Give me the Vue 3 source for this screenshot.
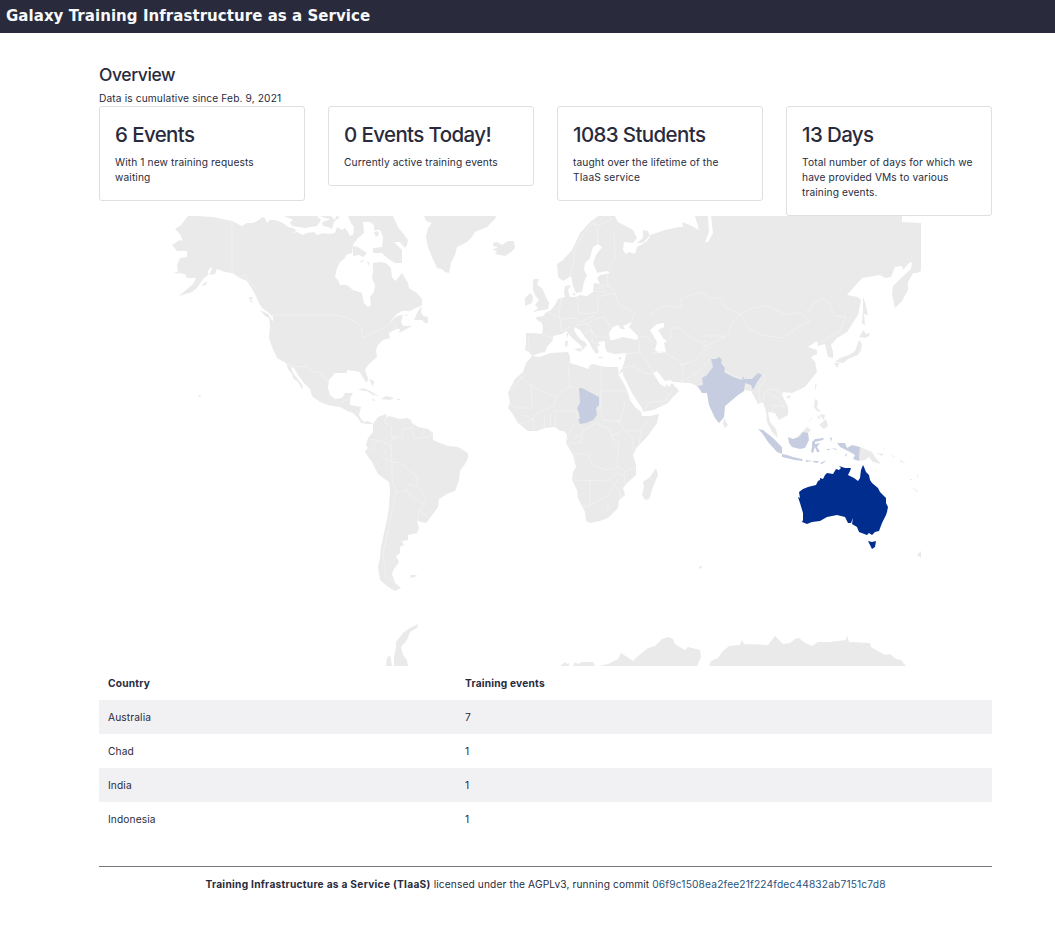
<script setup>
const stats = [
  { title: '6 Events', text: 'With 1 new training requests waiting' },
  { title: '0 Events Today!', text: 'Currently active training events' },
  { title: '1083 Students', text: 'taught over the lifetime of the TIaaS service' },
  { title: '13 Days', text: 'Total number of days for which we have provided VMs to various training events.' },
]

const rows = [
  { country: 'Australia', events: 7 },
  { country: 'Chad', events: 1 },
  { country: 'India', events: 1 },
  { country: 'Indonesia', events: 1 },
]

const land = [
  // North and Central America
  'M188 216L184 221L181 225L175 229L180 234L183 241L180 240L172 245L177 251L187 251L187 257L180 258L177 265L178 273L185 274L187 278L196 278L193 284L179 296L186 294L192 292L197 288L203 279L208 275L208 271L211 267L212 269L209 275L215 274L217 269L225 272L232 273L240 278L247 281L252 289L256 296L258 301L260 305L263 309L268 312L273 317L273 321L269 318L270 325L269 338L272 347L277 358L286 363L288 369L292 374L293 378L298 382L302 389L303 386L297 378L293 373L291 367L294 368L298 375L304 383L310 389L312 396L320 402L328 405L333 406L340 407L347 411L353 413L358 418L361 423L367 424L373 424L368 421L364 422L361 419L359 415L361 407L350 405L350 398L353 393L345 393L342 398L335 399L330 395L328 388L329 380L335 373L347 373L347 370L355 371L360 372L363 378L367 383L368 378L365 370L368 365L377 357L376 350L378 345L383 340L390 338L389 333L396 329L400 329L399 333L403 331L412 326L403 326L401 322L403 315L397 316L389 323L397 314L402 311L410 311L422 305L422 299L417 293L409 288L408 283L402 273L398 278L395 281L392 277L391 268L386 263L380 262L373 263L373 272L372 278L375 285L374 292L370 297L371 305L368 307L364 303L362 293L353 290L347 285L340 285L338 280L335 277L337 268L340 262L345 258L346 255L352 253L353 245L355 242L354 234L350 236L348 232L345 228L342 230L337 227L335 233L328 234L323 233L317 235L314 232L307 233L303 235L297 232L291 233L297 231L293 228L288 227L283 223L275 220L270 220L267 223L265 218L262 217L259 220L253 223L247 223L242 226L232 221L213 217L197 216Z',
  'M284 216L317 216L321 220L317 226L305 228L292 226L290 222L293 220Z',
  'M320 216L331 216L335 220L336 216L340 217L334 222L332 229L328 227L323 226L322 222L326 221L330 219L325 218Z',
  'M348 216L393 216L398 227L408 240L407 245L405 248L400 242L394 242L402 250L402 263L395 263L387 258L382 253L373 253L373 248L382 247L383 237L380 230L374 230L374 225L370 222L363 222L364 233L358 238L355 242L353 237L354 227L351 223Z',
  'M353 246L358 247L367 253L363 257L359 255L353 256Z',
  'M374 232L378 231L379 235L376 237Z M360 261L364 260L362 263Z M367 262L369 262L369 266Z',
  'M422 306L418 311L414 320L422 320L425 323L428 323L428 317L423 316L421 312Z M403 314L408 315L407 316Z',
  'M424 216L496 216L495 219L487 227L475 232L471 238L467 242L457 247L455 255L451 263L449 273L445 272L442 269L437 268L432 257L428 247L426 237L428 228L432 223L426 221Z',
  'M493 243L497 242L502 245L508 241L514 241L515 248L511 252L505 256L495 254L497 251L492 250L498 247L493 246Z',
  'M358 390L363 388L370 391L375 394L380 396L373 395L367 391Z M381 399L386 396L394 398L390 400Z M397 399H400V400H397Z M372 399L376 400L373 401Z M369 379L374 381L373 387Z',
  'M198 395L201 396L200 398Z M249 297L253 297L251 300L254 304L250 301Z M260 310L268 314L272 320L265 316Z M201 286L207 281L206 285Z M174 272L178 272L177 274Z',
  // South America
  'M373 424L378 417L386 414L387 419L388 416L393 417L400 419L407 418L411 420L412 423L418 427L428 429L433 433L433 440L440 443L448 446L458 447L468 453L468 458L465 464L460 471L459 480L455 491L447 494L439 499L438 507L430 518L426 523L417 521L419 528L417 533L408 535L408 540L402 541L404 545L400 547L400 553L396 556L399 562L394 569L392 574L395 583L401 588L395 591L387 586L380 580L378 567L380 558L381 547L384 533L387 520L389 507L390 490L389 482L378 474L372 462L366 454L365 451L368 448L366 445L368 438L373 432Z',
  'M410 575L417 575L415 577L411 578Z',
  // Europe, Asia and the Arabian peninsula
  'M557 264L558 277L563 281L571 276L573 286L576 293L582 292L584 282L587 275L584 270L585 263L590 258L593 247L598 244L602 247L596 255L593 263L596 270L597 273L607 271L610 273L600 275L597 278L600 284L594 283L593 292L587 296L580 295L576 297L570 297L568 290L571 285L565 286L564 293L565 297L558 299L555 305L551 310L545 313L544 316L536 317L537 320L542 323L543 328L542 334L533 333L526 333L526 343L525 350L529 352L532 356L540 353L545 352L547 347L553 340L553 336L562 334L566 331L568 333L572 338L578 343L582 347L581 352L584 348L587 345L585 342L580 339L577 335L574 330L575 327L580 330L585 337L589 342L592 348L596 354L599 352L597 347L600 345L598 342L605 341L605 347L607 352L615 354L626 353L625 360L622 368L619 374L623 372L623 375L633 395L642 408L643 412L653 410L668 403L673 397L679 391L672 383L669 387L667 384L665 387L660 384L653 373L657 371L665 381L670 380L673 382L690 383L695 385L699 389L702 393L707 393L709 405L715 418L719 423L724 417L725 406L738 395L745 390L751 391L756 400L758 404L763 402L766 412L767 422L772 432L778 438L776 429L770 422L768 412L775 413L779 420L788 415L788 407L782 395L783 392L792 393L805 387L817 372L815 362L811 357L817 354L817 350L808 347L817 341L818 346L825 344L828 357L833 358L833 352L831 345L837 338L847 332L858 315L861 300L858 297L847 295L862 278L880 275L885 278L891 277L895 267L902 266L903 270L910 262L912 263L911 269L902 277L893 286L892 294L895 308L902 301L908 290L908 282L913 273L917 273L921 271L921 223L902 222L902 216L711 216L713 233L708 242L705 242L709 232L708 216L695 216L699 230L690 225L682 222L683 227L679 227L665 230L650 235L644 242L641 243L637 243L643 238L643 230L648 231L650 237L646 242L637 247L635 254L629 252L626 254L623 250L624 242L633 243L637 238L633 230L618 222L615 216L598 216L590 222L580 233L572 250L563 260Z',
  'M533 282L534 279L539 279L537 285L542 288L545 295L549 303L548 309L533 312L538 308L535 305L539 300L535 295L533 290Z M525 298L530 293L533 296L532 303L525 306Z',
  'M565 341L568 341L567 347L565 346Z M566 334L568 333L568 338Z M574 349L581 348L580 352Z M598 357L603 357L603 358L598 358Z M618 358L622 357L620 360Z M572 294L575 293L575 296Z',
  // Africa
  'M618 367L619 376L622 380L627 390L630 400L635 407L641 412L642 416L650 416L659 414L657 423L647 437L637 447L633 455L636 465L636 475L627 483L623 488L625 495L619 500L618 508L608 518L600 521L590 523L586 521L585 512L578 498L577 490L572 480L573 472L576 467L573 455L566 443L567 435L564 431L560 431L555 427L545 428L537 431L528 431L518 423L512 413L508 408L510 402L508 392L515 379L523 372L526 363L532 356L540 357L550 353L568 352L570 357L570 363L580 366L588 369L590 365L594 364L600 366L608 367Z',
  'M656 468L658 475L653 487L649 499L645 500L642 495L644 487L643 482L650 477Z',
  // Asian islands and Oceania
  'M724 418L728 425L725 428L723 424Z M786 397L791 395L789 399Z M815 385L817 383L815 391Z M815 399L818 401L817 408L822 412L817 411L814 407Z M820 424L826 419L828 426L824 429L819 425Z M821 414L825 415L824 420L820 416Z M817 415L819 420L820 417Z M807 423L812 417L812 418Z',
  'M863 330L866 334L870 333L869 336L865 338L859 337L861 334Z M859 340L862 344L861 350L858 355L848 359L843 363L835 362L840 358L849 355L855 351Z M834 363L839 363L837 368Z',
  'M863 297L865 302L868 315L864 314L865 325L862 323L863 312Z',
  'M790 440L796 438L807 427L811 430L807 434L802 434L797 440Z',
  'M860 447L872 452L875 457L881 464L873 462L869 457L865 460L859 461Z M876 453L883 454L886 450L882 456Z M881 446L886 450L884 449Z M890 454L896 458L893 457Z M899 459L906 464L901 462Z M911 487L918 491L917 492Z M917 474L919 478L917 477Z M910 479H912V480H910Z',
  'M921 551L917 555L921 558Z M699 566L703 567L699 569Z',
  // Antarctica
  'M418 624L417 628L410 632L407 640L401 647L403 655L407 660L408 666L394 666L394 657L396 647L396 642L403 633L410 628Z M390 655L392 666L386 666L387 658Z',
  'M560 666L565 662L567 664L569 663L569 666Z M573 666L575 662L578 664L582 662L593 662L595 666Z M599 666L608 664L618 659L621 653L627 657L633 661L637 657L648 648L655 646L662 639L668 637L673 639L675 644L685 650L688 647L700 650L701 657L697 666Z',
  'M709 666L711 661L718 658L722 652L729 646L740 645L742 640L744 644L768 645L775 636L783 644L790 643L795 639L799 638L805 643L812 646L818 642L830 642L846 640L847 635L849 642L870 643L871 647L885 655L890 654L896 659L901 660L906 666Z',
]

const water = [
  'M610 340L609 333L613 327L618 325L621 329L625 329L623 326L632 322L629 327L638 336L637 340L623 337L613 340Z',
  'M650 330L657 324L664 323L664 327L658 330L663 338L667 341L664 343L666 352L659 353L655 350L657 342Z',
]

const borders = [
  'M232 221V272L240 278L244 274L250 282L257 290',
  'M272 315H336L348 318L358 323L362 330L362 338L370 334L378 330L384 328L391 322L396 324L396 330',
  'M286 364L296 367L307 366L314 373L319 371L326 380L329 381 M341 404L345 400H349',
  'M386 416L385 423L392 427L391 436L397 438L391 440L391 447 M392 437L402 437L403 429L413 428L412 423 M415 430L418 427M422 435L424 429M413 430L414 438L429 437L432 432',
  'M369 439L381 441L391 446L392 462L383 457L386 449 M369 452L379 440 M392 463L400 462L411 472L417 477L418 486L424 494L426 504L419 510L418 521 M392 463L392 480L396 492L406 491L409 484L418 487 M396 492L388 531L383 553L386 578L393 581 M420 511L428 517 M406 491L414 498L424 504',
  'M570 277L574 262L574 250L583 235L592 223L600 225L612 219 M598 244L597 228L592 223 M614 229L615 258L608 270 M607 274L608 285L614 291L619 304L635 313L632 320 M594 291L605 292 M598 297L614 293 M578 297L578 312L588 314L598 312L598 297 M561 299L559 315L562 319L575 318L580 322L594 316 M547 312L560 318L561 331L570 327 M575 325L588 324L596 337L608 337 M588 325L594 319L604 317L611 328 M585 333L592 330L592 342L597 344 M543 335L553 338 M528 337L530 351 M599 285L609 286 M596 288L604 288',
  'M622 355L639 352L645 358L653 372 M638 338L646 336L652 342 M622 368L633 366L644 373L652 374 M639 341L640 353 M643 412L650 402L665 401L672 391 M651 354L661 351L675 358L683 365L682 381 M670 342L671 329L678 327L687 334L700 343L707 341 M650 315L659 308L670 306L682 308L681 299L700 292L712 299L719 297L725 307L740 314L731 324L728 335L715 342L703 347 M703 336L720 336L726 338',
  'M740 314L753 308L766 306L774 309L787 315L800 312L806 318L810 321L795 329L783 338L761 335L748 328L741 315 M806 312L810 310L815 302L823 299L830 304L834 316L846 317L840 331L830 336L820 343',
  'M680 365L694 361L704 350L711 347 M682 381L697 373L710 359 M725 372L740 378 M744 391L747 385L751 391 M760 403L759 388L765 380L764 374 M763 401L764 393L771 389L778 390L784 397 M769 393L777 398L786 408 M772 412L773 405L784 407',
  'M523 376L513 388L508 392 M519 376L536 389L556 397L570 386L568 362 M531 384L532 408L515 408L510 403 M556 397L554 406L539 412L529 422L519 424 M568 386L578 388 M601 366V397H599 M601 391H627L632 400 M555 411L576 411L578 419 M544 427L545 417M550 427L551 413M555 427L556 411 M534 430V420L524 415 M601 397L600 409L603 420L620 422L625 402',
  'M574 424L569 434L567 440 M580 424L583 431L596 423L611 430L612 438L619 442L618 455L617 466L626 472L638 465 M617 419L625 431L640 431L648 421 M641 432L639 445 M611 436L624 430L633 439L633 450 M613 447L618 443 M574 454L588 454L592 465L607 470L618 467 M572 480L608 481L617 473L624 476 M590 480V505L602 499L609 494L618 480 M578 504L590 507 M607 511L610 507L608 505Z M566 443L580 443L583 431 M611 481L619 491L621 499 M573 439L580 434 M624 472L625 483',
]

const indonesia = 'M758 429L763 430L773 438L782 447L782 454L777 452L768 442L762 433Z M782 454L787 455L793 457L802 459L803 461L795 460L782 457Z M788 437L793 439L799 437L803 432L808 433L809 440L805 448L800 449L792 447L789 443Z M812 442L815 439L824 438L823 440L815 442L815 444L820 443L817 447L820 452L817 452L815 447L813 453L811 452L812 447Z M830 437L832 438L831 442Z M837 443L845 443L847 448L852 445L860 447L859 461L853 459L855 455L850 452L844 449L840 447Z M827 449H830V450H827Z M831 448L837 449L836 450Z M806 460L812 461L806 462Z M813 461L819 461L817 463L813 462Z M820 463L827 460L822 464Z M845 455L847 453L846 457Z'
</script>

<template>
  <div class="page">
    <header class="navbar">Galaxy Training Infrastructure as a Service</header>
    <main class="container">
      <h1 class="overview">Overview</h1>
      <p class="since">Data is cumulative since Feb. 9, 2021</p>
      <section class="cards">
        <article v-for="s in stats" :key="s.title" class="card">
          <h2>{{ s.title }}</h2>
          <p>{{ s.text }}</p>
        </article>
      </section>
      <svg class="map" width="750" height="450" viewBox="171 216 750 450">
        <path v-for="(d, i) in land" :key="'l' + i" class="land" :d="d" />
        <path v-for="(d, i) in water" :key="'w' + i" class="water" :d="d" />
        <path v-for="(d, i) in borders" :key="'b' + i" class="border" :d="d" />
        <path class="low" d="M711 359L716 359L719 357L722 360L721 363L725 368L724 372L733 377L742 380L743 376L744 379L752 379L758 373L762 375L757 382L753 390L751 385L745 383L744 391L738 395L725 406L724 417L719 423L715 418L709 405L707 393L702 393L698 386L703 385L702 378L707 375L713 367L712 363Z" />
        <path class="low" d="M579 388L582 388L599 397L599 405L596 408L597 415L593 420L586 423L580 424L578 419L580 419L579 413L577 408L580 403Z" />
        <path class="low" :d="indonesia" />
        <path class="high" d="M799 492L803 489L808 487L816 485L818 481L820 480L820 478L823 479L825 475L827 473L833 474L836 469L839 470L841 468L839 466L845 468L851 468L850 471L848 475L854 478L858 481L860 478L861 470L863 465L864 467L866 472L869 475L870 480L872 483L878 488L880 492L886 498L886 503L888 507L887 512L886 515L882 523L879 531L875 532L872 535L869 533L867 535L859 532L857 527L852 524L853 518L851 523L848 523L845 517L837 515L827 517L820 521L812 522L807 524L802 522L803 520L803 513L800 503L798 497L800 498Z M868 541L872 542L876 541L875 547L872 549Z" />
      </svg>
      <table class="table">
        <thead>
          <tr><th class="country">Country</th><th>Training events</th></tr>
        </thead>
        <tbody>
          <tr v-for="r in rows" :key="r.country"><td>{{ r.country }}</td><td>{{ r.events }}</td></tr>
        </tbody>
      </table>
      <footer class="footer">
        <b>Training Infrastructure as a Service (TIaaS)</b> licensed under the AGPLv3, running commit <a>06f9c1508ea2fee21f224fdec44832ab7151c7d8</a>
      </footer>
    </main>
  </div>
</template>

<style>
body { background: #fff; }
</style>

<style scoped>
.page {
  min-height: 928px;
  background: #fff;
  color: #292b3d;
  font: 10.2px/15px Inter, "Liberation Sans", sans-serif;
  letter-spacing: 0.12px;
}
.navbar {
  box-sizing: border-box;
  height: 33px;
  padding-left: 6px;
  background: #292b3d;
  color: #f8f9fa;
  font: bold 15px/33px "DejaVu Sans", sans-serif;
  letter-spacing: 0.05px;
  white-space: nowrap;
}
.container { width: 893px; margin-left: 99px; padding-top: 31px; }
h1, h2, p { margin: 0; }
.overview { font-size: 17.5px; font-weight: 500; line-height: 22px; letter-spacing: -0.4px; }
.since { margin-top: 5px; }
.cards {
  display: grid;
  grid-template-columns: repeat(4, 206px);
  column-gap: 23px;
  align-items: start;
}
.card {
  box-sizing: border-box;
  padding: 15px;
  border: 1px solid #dfdfdf;
  border-radius: 3px;
  background: #fff;
}
.card h2 { margin-bottom: 8px; font-size: 20.5px; font-weight: 500; line-height: 25px; letter-spacing: -0.62px; }
.map { display: block; margin: 0 auto; position: relative; left: 0.5px; }
.land { fill: #eaeaea; }
.water { fill: #fff; }
.border { fill: none; stroke: #f5f5f5; stroke-width: 0.55; stroke-linejoin: round; }
.low { fill: #c6cde0; }
.high { fill: #002d8e; }
.table { width: 100%; border-collapse: collapse; table-layout: fixed; }
.table th, .table td { height: 34px; padding: 0 9px; text-align: left; }
.table th { font-weight: 700; letter-spacing: 0.2px; }
.table .country { width: 339px; }
.table tbody tr:nth-child(odd) { background: #f1f1f3; }
.footer { margin-top: 30px; padding-top: 10px; border-top: 1px solid #75777f; text-align: center; white-space: nowrap; }
.footer b { letter-spacing: 0.27px; }
.footer a { color: #25537b; letter-spacing: 0.16px; }
</style>
